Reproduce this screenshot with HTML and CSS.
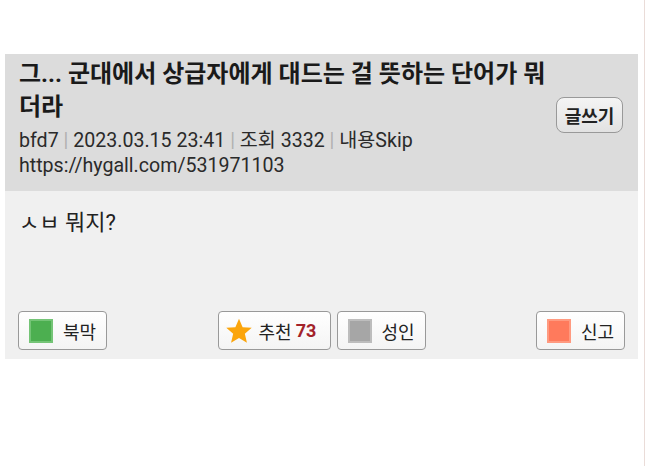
FILE: index.html
```html
<!DOCTYPE html>
<html lang="ko">
<head>
  <meta charset="UTF-8">
  <meta name="viewport" content="width=device-width, initial-scale=1.0">
  <title>그... 군대에서 상급자에게 대드는 걸 뜻하는 단어가 뭐더라</title>
  <link rel="stylesheet" href="styles.css">
</head>
<body>
  <div class="page">
    <div class="post-head">
      <div class="head-text">
        <h1 class="title">그... 군대에서 상급자에게 대드는 걸 뜻하는 단어가 뭐더라</h1>
        <div class="meta">bfd7 <span class="sep">|</span> 2023.03.15 23:41 <span class="sep">|</span> 조회 3332 <span class="sep">|</span> 내용Skip</div>
        <div class="url">https://hygall.com/531971103</div>
      </div>
      <button class="write-btn">글쓰기</button>
    </div>
    <div class="post-body">
      <p class="content">ㅅㅂ 뭐지?</p>
      <div class="actions">
        <button class="act"><span class="sq green"></span>북막</button>
        <div class="mid">
          <button class="act rec">
            <svg class="star" viewBox="0 0 24 24" width="28" height="28"><path d="M12 1.5l3.1 7.2 7.8.6-5.9 5.1 1.8 7.6L12 18l-6.8 4 1.8-7.6-5.9-5.1 7.8-.6z" fill="#fba50c"/></svg>
            추천 <b class="count">73</b>
          </button>
          <button class="act"><span class="sq gray"></span>성인</button>
        </div>
        <button class="act"><span class="sq red"></span>신고</button>
      </div>
    </div>
  </div>
  <div class="edge"></div>
</body>
</html>
```

FILE: styles.css
```css
html, body {
  height: 100%;
}
body {
  margin: 0;
  background: #fff;
  font-family: Roboto, "Noto Sans CJK KR", sans-serif;
  color: #222;
  display: flex;
}
.page {
  width: 633px;
  margin-left: 5px;
  padding-top: 54px;
}
.edge {
  width: 1px;
  margin-left: 6px;
  background: #eadcd8;
}
.post-head {
  background: #dcdcdc;
  display: flex;
  align-items: center;
  padding: 4px 15px 13px 14px;
}
.head-text {
  flex: 1;
}
.title {
  margin: 0;
  max-width: 535px;
  font-size: 24px;
  line-height: 33px;
  font-weight: bold;
  color: #1a1a1a;
}
.meta, .url {
  font-size: 19.6px;
  line-height: 25px;
  color: #2a2a2a;
}
.meta {
  margin-top: 4px;
}
.sep {
  color: #b0b0b0;
}
.write-btn {
  font-family: inherit;
  font-size: 18px;
  font-weight: bold;
  color: #222;
  width: 67px;
  height: 36px;
  margin-bottom: 6px;
  border: 1px solid #999;
  border-radius: 8px;
  background: linear-gradient(#f4f4f4, #e2e2e2);
  padding: 0;
}
.post-body {
  background: #f0f0f0;
  padding: 20px 13px 9px;
}
.content {
  margin: 0 0 0 1px;
  font-size: 22px;
  line-height: 24px;
  height: 100px;
  color: #222;
}
.actions {
  display: flex;
  justify-content: space-between;
  align-items: center;
}
.mid {
  display: flex;
  gap: 6px;
}
.act {
  font-family: inherit;
  font-size: 18px;
  color: #222;
  height: 39px;
  width: 89px;
  display: flex;
  align-items: center;
  gap: 10px;
  padding: 0 0 0 10px;
  border: 1px solid #999;
  border-radius: 4px;
  background: linear-gradient(#fff, #f4f4f4);
}
.act.rec {
  width: 113px;
  padding-left: 6px;
  gap: 6px;
}
.sq {
  width: 20px;
  height: 20px;
  border: 2px solid;
  box-sizing: content-box;
}
.green {
  background: #4caf50;
  border-color: #74c476;
}
.gray {
  background: #a6a6a6;
  border-color: #bdbdbd;
}
.red {
  background: #ff7a5c;
  border-color: #ff9a80;
}
.count {
  color: #a3222a;
  margin-left: -2px;
}
```
